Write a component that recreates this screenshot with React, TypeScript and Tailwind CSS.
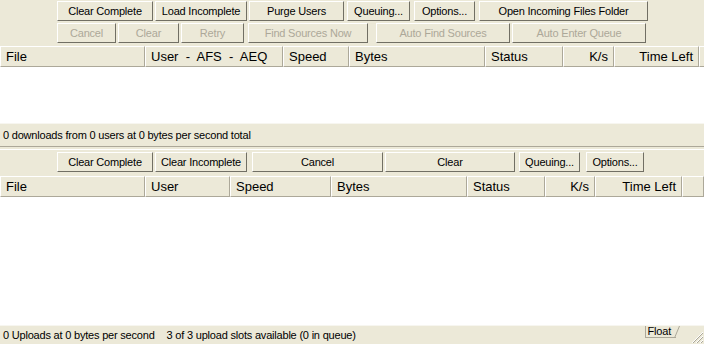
import React from "react";

type Btn = { label: string; w: number; ml?: number; disabled?: boolean };
type Col = { label: string; w?: number; right?: boolean };

const FONT = "font-['Liberation_Sans',Arial,sans-serif]";

function XpButton({ label, w, ml = 0, disabled }: Btn) {
  return (
    <div
      style={{ width: w, marginLeft: ml }}
      className={`flex h-[20px] shrink-0 items-center justify-center border border-t-white border-l-white border-r-[#716f64] border-b-[#716f64] bg-[#ece9d8] text-[11px] tracking-[-0.2px] leading-none ${
        disabled ? "text-[#aca899]" : "text-black"
      }`}
    >
      {label}
    </div>
  );
}

function ButtonRow({ items, className = "" }: { items: Btn[]; className?: string }) {
  return (
    <div className={`flex pl-[57px] ${className}`}>
      {items.map((b) => (
        <XpButton key={b.label + b.ml} {...b} />
      ))}
    </div>
  );
}

function Header({ cols }: { cols: Col[] }) {
  return (
    <div className="flex h-[21px] w-full">
      {cols.map((c, i) => (
        <div
          key={i}
          style={c.w ? { width: c.w } : undefined}
          className={`flex h-full items-center border border-t-white border-l-white border-r-[#aca899] border-b-[#aca899] bg-[#ece9d8] px-[5px] pt-[1px] text-[13px] text-black ${
            c.w ? "shrink-0" : "flex-1"
          } ${c.right ? "justify-end" : "justify-start"}`}
        >
          <span className="whitespace-pre">{c.label}</span>
        </div>
      ))}
    </div>
  );
}

const row1: Btn[] = [
  { label: "Clear Complete", w: 96 },
  { label: "Load Incomplete", w: 92, ml: 2 },
  { label: "Purge Users", w: 95, ml: 2 },
  { label: "Queuing...", w: 63, ml: 3 },
  { label: "Options...", w: 61, ml: 4 },
  { label: "Open Incoming Files Folder", w: 169, ml: 4 },
];

const row2: Btn[] = [
  { label: "Cancel", w: 59, disabled: true },
  { label: "Clear", w: 61, ml: 2, disabled: true },
  { label: "Retry", w: 63, ml: 2, disabled: true },
  { label: "Find Sources Now", w: 120, ml: 4, disabled: true },
  { label: "Auto Find Sources", w: 134, ml: 8, disabled: true },
  { label: "Auto Enter Queue", w: 134, ml: 2, disabled: true },
];

const row3: Btn[] = [
  { label: "Clear Complete", w: 96 },
  { label: "Clear Incomplete", w: 92, ml: 2 },
  { label: "Cancel", w: 131, ml: 5 },
  { label: "Clear", w: 130, ml: 2 },
  { label: "Queuing...", w: 61, ml: 4 },
  { label: "Options...", w: 58, ml: 6 },
];

const head1: Col[] = [
  { label: "File", w: 145 },
  { label: "User  -  AFS  -  AEQ", w: 138 },
  { label: "Speed", w: 66 },
  { label: "Bytes", w: 136 },
  { label: "Status", w: 78 },
  { label: "K/s", w: 51, right: true },
  { label: "Time Left", w: 85, right: true },
  { label: "" },
];

const head2: Col[] = [
  { label: "File", w: 145 },
  { label: "User", w: 85 },
  { label: "Speed", w: 101 },
  { label: "Bytes", w: 136 },
  { label: "Status", w: 78 },
  { label: "K/s", w: 50, right: true },
  { label: "Time Left", w: 87, right: true },
  { label: "" },
];

export default function App() {
  return (
    <div className={`flex h-[344px] w-[704px] flex-col overflow-hidden bg-[#ece9d8] ${FONT}`}>
      <ButtonRow items={row1} className="mt-[1px]" />
      <ButtonRow items={row2} className="mt-[2px]" />
      <div className="mt-[3px]">
        <Header cols={head1} />
      </div>
      <div className="h-[56px] bg-white" />
      <div className="flex h-[23px] items-center border-t border-t-[#f7f6f0] px-[3px] pt-[1px] text-[11px] tracking-[-0.2px] text-black">
        0 downloads from 0 users at 0 bytes per second total
      </div>
      <div className="h-[4px] border-t border-t-[#aca899] border-b border-b-white" />
      <ButtonRow items={row3} className="mt-[2px]" />
      <div className="mt-[4px]">
        <Header cols={head2} />
      </div>
      <div className="h-[128px] bg-white" />
      <div className="relative flex flex-1 items-center border-t border-t-[#f7f6f0] px-[3px] pt-[1px] text-[11px] tracking-[-0.2px] text-black">
        <span>0 Uploads at 0 bytes per second</span>
        <span className="ml-[12px]">3 of 3 upload slots available (0 in queue)</span>
        <div className="absolute right-[28px] top-0 flex h-[12px] items-center border-b border-l border-b-[#aca899] border-l-[#aca899] bg-[#ece9d8] pl-[2px] pr-[5px] text-[11px] leading-none">
          Float
          <svg className="absolute -right-[4px] top-0" width="6" height="12" viewBox="0 0 6 12">
            <line x1="0.5" y1="12" x2="5.5" y2="0" stroke="#aca899" strokeWidth="1" />
          </svg>
        </div>
        <svg className="absolute bottom-0 right-0" width="13" height="13" viewBox="0 0 13 13">
          <g strokeWidth="1">
            <line x1="12" y1="1" x2="1" y2="12" stroke="#fff" />
            <line x1="12" y1="2" x2="2" y2="12" stroke="#aca899" />
            <line x1="12" y1="5" x2="5" y2="12" stroke="#fff" />
            <line x1="12" y1="6" x2="6" y2="12" stroke="#aca899" />
            <line x1="12" y1="9" x2="9" y2="12" stroke="#fff" />
            <line x1="12" y1="10" x2="10" y2="12" stroke="#aca899" />
          </g>
        </svg>
      </div>
    </div>
  );
}
